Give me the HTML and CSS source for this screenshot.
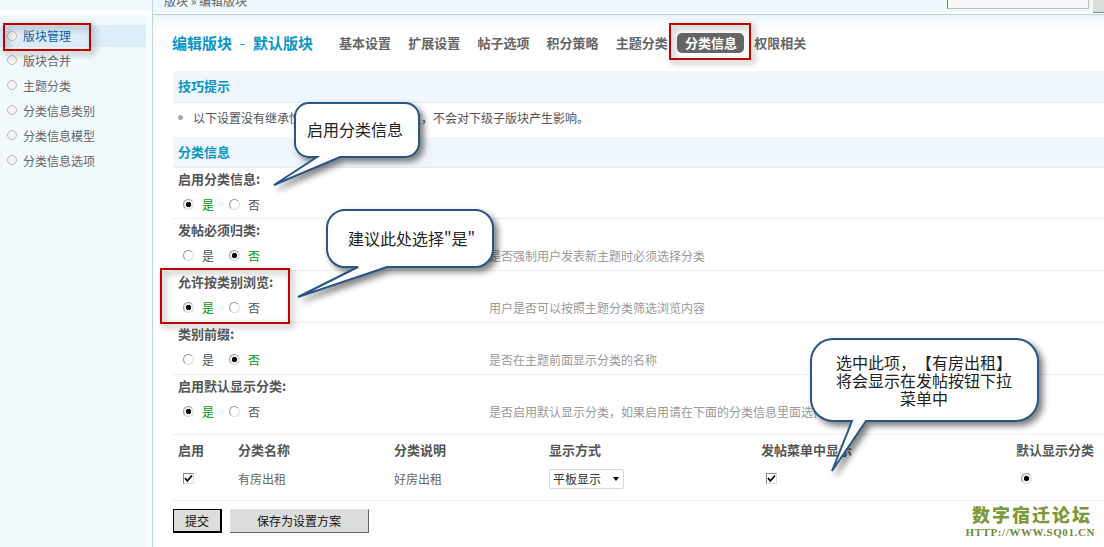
FILE: index.html
```html
<!DOCTYPE html>
<html lang="zh-CN">
<head>
<meta charset="utf-8">
<title>编辑版块</title>
<link rel="stylesheet" href="styles.css">
</head>
<body>
<div class="page">
  <aside class="side">
    <div class="side-top"></div>
    <ul class="side-nav">
      <li class="active">版块管理</li>
      <li>版块合并</li>
      <li>主题分类</li>
      <li>分类信息类别</li>
      <li>分类信息模型</li>
      <li>分类信息选项</li>
    </ul>
  </aside>
  <main class="main">
    <header class="topbar">
      <div class="crumb">版块 » 编辑版块</div>
      <div class="search"><span class="search-box"></span><span class="search-btn"></span></div>
    </header>
    <div class="content">
      <div class="titlebar">
        <h1 class="title"><span>编辑版块</span><span class="dash">-</span><span>默认版块</span></h1>
        <nav class="tabs">
          <a>基本设置</a><a>扩展设置</a><a>帖子选项</a><a>积分策略</a><a>主题分类</a><a class="on">分类信息</a><a>权限相关</a>
        </nav>
      </div>
      <h2 class="sec sec-tip">技巧提示</h2>
      <div class="tip"><i class="dot"></i>以下设置没有继承性，即仅对当前版块有效，不会对下级子版块产生影响。</div>
      <h2 class="sec sec-info">分类信息</h2>

      <div class="row first">
        <div class="label">启用分类信息:</div>
        <div class="ctrl">
          <div class="opts"><label class="sel"><input type="radio" name="a" checked>是</label><label><input type="radio" name="a">否</label></div>
          <div class="desc"></div>
        </div>
      </div>
      <div class="row">
        <div class="label">发帖必须归类:</div>
        <div class="ctrl">
          <div class="opts"><label><input type="radio" name="b">是</label><label class="sel"><input type="radio" name="b" checked>否</label></div>
          <div class="desc">是否强制用户发表新主题时必须选择分类</div>
        </div>
      </div>
      <div class="row">
        <div class="label">允许按类别浏览:</div>
        <div class="ctrl">
          <div class="opts"><label class="sel"><input type="radio" name="c" checked>是</label><label><input type="radio" name="c">否</label></div>
          <div class="desc">用户是否可以按照主题分类筛选浏览内容</div>
        </div>
      </div>
      <div class="row">
        <div class="label">类别前缀:</div>
        <div class="ctrl">
          <div class="opts"><label><input type="radio" name="d">是</label><label class="sel"><input type="radio" name="d" checked>否</label></div>
          <div class="desc">是否在主题前面显示分类的名称</div>
        </div>
      </div>
      <div class="row last">
        <div class="label">启用默认显示分类:</div>
        <div class="ctrl">
          <div class="opts"><label class="sel"><input type="radio" name="e" checked>是</label><label><input type="radio" name="e">否</label></div>
          <div class="desc">是否启用默认显示分类，如果启用请在下面的分类信息里面选择</div>
        </div>
      </div>

      <div class="tbl">
        <div class="th">启用</div><div class="th">分类名称</div><div class="th">分类说明</div><div class="th">显示方式</div><div class="th">发帖菜单中显示</div><div class="th">默认显示分类</div>
        <div class="td td-check"><input type="checkbox" checked></div>
        <div class="td">有房出租</div>
        <div class="td">好房出租</div>
        <div class="td"><span class="selectwrap"><select class="select"><option>平板显示</option></select></span></div>
        <div class="td td-check2"><input type="checkbox" checked></div>
        <div class="td td-radio"><input type="radio" name="f" checked></div>
      </div>

      <div class="actions">
        <button class="btn btn-main" type="button">提交</button>
        <button class="btn btn-save" type="button">保存为设置方案</button>
      </div>
    </div>
  </main>

  <div class="redbox rb1"></div>
  <div class="redbox rb2"></div>
  <div class="redbox rb3"></div>

  <div class="callout c1">
    <svg width="155" height="90" viewBox="0 0 155 90"><path d="M39 3H135a14 14 0 0 1 14 14V43a14 14 0 0 1-14 14H70L4 85 47 57H39a14 14 0 0 1-14-14V17a14 14 0 0 1 14-14Z"/></svg>
    <span class="ctext">启用分类信息</span>
  </div>
  <div class="callout c2">
    <svg width="205" height="95" viewBox="0 0 205 95"><path d="M50 3H180a18 18 0 0 1 18 18V42a18 18 0 0 1-18 18H92L3 90 63 60H50a18 18 0 0 1-18-18V21a18 18 0 0 1 18-18Z"/></svg>
    <span class="ctext">建议此处选择"是"</span>
  </div>
  <div class="callout c3">
    <svg width="235" height="140" viewBox="0 0 235 140"><path d="M25 3H208a22 22 0 0 1 22 22V63a22 22 0 0 1-22 22H58L24 135 44 85H25a22 22 0 0 1-22-22V25a22 22 0 0 1 22-22Z"/></svg>
    <span class="ctext">选中此项，【有房出租】<br>将会显示在发帖按钮下拉<br>菜单中</span>
  </div>

  <div class="mark">
    <div class="mark-cn">数字宿迁论坛</div>
    <div class="mark-en">HTTP://WWW.SQ01.CN</div>
  </div>
</div>
</body>
</html>
```
FILE: styles.css
```css
* { box-sizing: border-box; }
html, body { margin: 0; padding: 0; }
body {
  width: 1104px;
  height: 547px;
  overflow: hidden;
  background: #fff;
  font-family: "Noto Sans CJK SC", "Liberation Sans", sans-serif;
  font-size: 12px;
  color: #555;
  text-spacing-trim: space-all;
}
.page { position: relative; display: flex; width: 1104px; height: 547px; overflow: hidden; }

/* sidebar */
.side {
  flex: 0 0 153px;
  background: linear-gradient(to right, #f2f9fd 146px, #f6fbfd 146px);
  border-right: 1px solid #b9d6e2;
}
.side-top { height: 15px; background: #f2f9fd; border-bottom: 5px solid #fff; }
.side-nav { list-style: none; margin: 0; padding: 10px 0 0; }
.side-nav li {
  position: relative;
  width: 146px;
  height: 25px;
  line-height: 23px;
  padding-left: 23px;
  color: #666;
}
.side-nav li::before {
  content: "";
  position: absolute;
  left: 7px;
  top: 6px;
  width: 8px;
  height: 8px;
  border-radius: 50%;
  border: 1px solid #bbb;
  background: #f4f4f4;
}
.side-nav li.active { height: 22px; margin-bottom: 2px; background: #dcecf8; color: #0d62a8; line-height: 22px; }

/* top */
.main { flex: 1; min-width: 0; }
.topbar {
  position: relative;
  height: 15px;
  display: flex;
  justify-content: space-between;
  background: linear-gradient(to bottom, #eef7fb 12px, #fff 12px);
  border-bottom: 1px solid #b5d5e0;
  overflow: hidden;
}
.crumb { margin: -8px 0 0 11px; line-height: 18px; height: 12px; color: #666; }
.search { display: flex; align-items: flex-start; gap: 4px; }
.search-box { display: block; width: 142px; height: 9px; background: #f8f8f8; border: 1px solid #bbb; border-top: 0; border-left-color: #777; }
.search-btn { display: block; width: 11px; height: 13px; background: #ddd; border-bottom: 1px solid #888; }

.content { padding-left: 20px; background: linear-gradient(to bottom, #eaf5f9, #fff 15px); background-repeat: no-repeat; }

.titlebar { height: 56px; display: flex; align-items: center; }
.title { display: flex; width: 167px; margin: 0 0 0 -1px; font-size: 15px; font-weight: 700; color: #0995c8; line-height: 20px; white-space: nowrap; }
.title .dash { width: 21px; text-align: center; font-weight: 400; }
.tabs { display: flex; }
.tabs a {
  width: 69.2px;
  font-size: 13px;
  font-weight: 700;
  color: #666;
  line-height: 20px;
  height: 20px;
  white-space: nowrap;
}
.tabs a.on {
  position: relative;
  z-index: 0;
  color: #fff;
}
.tabs a.on::before {
  content: "";
  position: absolute;
  z-index: -1;
  left: -8px;
  top: 0;
  width: 67px;
  height: 20px;
  border-radius: 5px;
  background: #666;
}

.sec { margin: 0; padding-left: 5px; font-size: 13px; font-weight: 700; color: #0995c8; background: #eff6fd; border-bottom: 1px dotted #d5e6f0; }
.sec-tip { height: 32px; line-height: 30px; }
.sec-info { height: 31px; line-height: 29px; }
.tip { height: 34px; line-height: 30px; padding-left: 20px; position: relative; }
.dot { position: absolute; left: 5px; top: 12px; width: 5px; height: 5px; border-radius: 50%; background: #aaa; }

.row { height: 52px; border-bottom: 1px dotted #cfe3f0; }
.row.first { height: 51px; }
.row.last { height: 60px; }
.label { height: 22px; line-height: 22px; padding-left: 5px; font-size: 13px; font-weight: 700; color: #555; }
.ctrl { display: flex; height: 29px; align-items: center; }
.opts { display: flex; width: 316px; padding-left: 10px; }
.opts label { display: flex; align-items: center; width: 46px; color: #555; }
.opts label.sel { color: #090; }
.desc { color: #999; white-space: nowrap; }

input[type=radio] {
  appearance: none;
  width: 11px;
  height: 11px;
  margin: 0 8px 0 0;
  border-radius: 50%;
  border: 1px solid #999;
  border-right-color: #ddd;
  border-bottom-color: #ddd;
  background: #fff;
}
input[type=radio]:checked { background: radial-gradient(circle, #000 2.2px, #f2f2f2 3px); }
input[type=checkbox] {
  appearance: none;
  display: block;
  width: 11px;
  height: 11px;
  margin: 0;
  border: 1px solid #888;
  border-right-color: #ddd;
  border-bottom-color: #ddd;
  background: #fff url("data:image/svg+xml,%3Csvg xmlns='http://www.w3.org/2000/svg' viewBox='0 0 9 9'%3E%3Cpath d='M1 4l2.3 3L8 1.5' fill='none' stroke='%23000' stroke-width='1.7'/%3E%3C/svg%3E") center/9px no-repeat;
}

.tbl {
  display: grid;
  grid-template-columns: 60px 156px 155px 212px 255px 1fr;
  grid-template-rows: 30px 27px;
  height: 66px;
  padding-left: 5px;
  border-bottom: 1px dotted #cfe3f0;
}
.th { font-size: 13px; font-weight: 700; color: #555; line-height: 30px; white-space: nowrap; }
.td { display: flex; align-items: center; color: #666; }
.td-check { padding-left: 5px; }
.td-check2 { padding-left: 5px; }
.td-radio { padding-left: 5px; }
.td-radio input { margin: 0; }
.selectwrap { position: relative; display: block; width: 75px; height: 20px; }
.selectwrap::after {
  content: "";
  position: absolute;
  right: 5px;
  top: 8px;
  border: 3.5px solid transparent;
  border-top: 4px solid #000;
  border-bottom: 0;
}
.select {
  appearance: none;
  width: 75px;
  height: 20px;
  padding: 0 0 0 3px;
  border: 1px solid #d4dde2;
  border-radius: 2px;
  background: #fff;
  font: 12px "Noto Sans CJK SC", sans-serif;
  color: #333;
}

.actions { display: flex; gap: 8px; margin-top: 8px; }
.btn { height: 24px; padding: 0; font: 12px/20px "Noto Sans CJK SC", sans-serif; color: #111; background: #ddd; }
.btn-main { width: 49px; border: 1px solid #000; border-bottom-width: 2px; border-right-width: 2px; }
.btn-save { width: 139px; border: 0; border-right: 1px solid #666; border-bottom: 1px solid #666; border-top: 1px solid #e8e8e8; }

/* annotations drawn over the page */
.redbox { position: absolute; border: 2px solid #c00000; filter: drop-shadow(3px 3px 3px rgba(0,0,0,.45)); }
.rb1 { left: 3px; top: 23px; width: 88px; height: 28px; }
.rb2 { left: 669px; top: 23px; width: 82px; height: 37px; }
.rb3 { left: 160px; top: 268px; width: 130px; height: 56px; }

.callout { position: absolute; }
.callout svg { display: block; overflow: visible; filter: drop-shadow(4px 4px 3px rgba(0,0,0,.5)); }
.callout path { fill: #fff; stroke: #2a5587; stroke-width: 2; }
.ctext { position: absolute; font-size: 16px; line-height: 18px; color: #222; text-align: center; white-space: nowrap; }
.c1 { left: 270px; top: 100px; }
.c1 .ctext { left: 37px; top: 20px; }
.c2 { left: 295px; top: 207px; }
.c2 .ctext { left: 53px; top: 22px; }
.c3 { left: 808px; top: 336px; }
.c3 .ctext { left: 28px; top: 17px; width: 176px; }

.mark { position: absolute; left: 965px; top: 504px; width: 130px; text-align: right; }
.mark-cn { font-size: 18px; line-height: 20px; font-weight: 900; letter-spacing: 2px; color: #7c9a3c; margin-right: 3px; white-space: nowrap; }
.mark-en { margin-top: 1px; font: 700 11px/14px "Liberation Serif", serif; letter-spacing: .6px; color: #6f8a38; white-space: nowrap; }
```
